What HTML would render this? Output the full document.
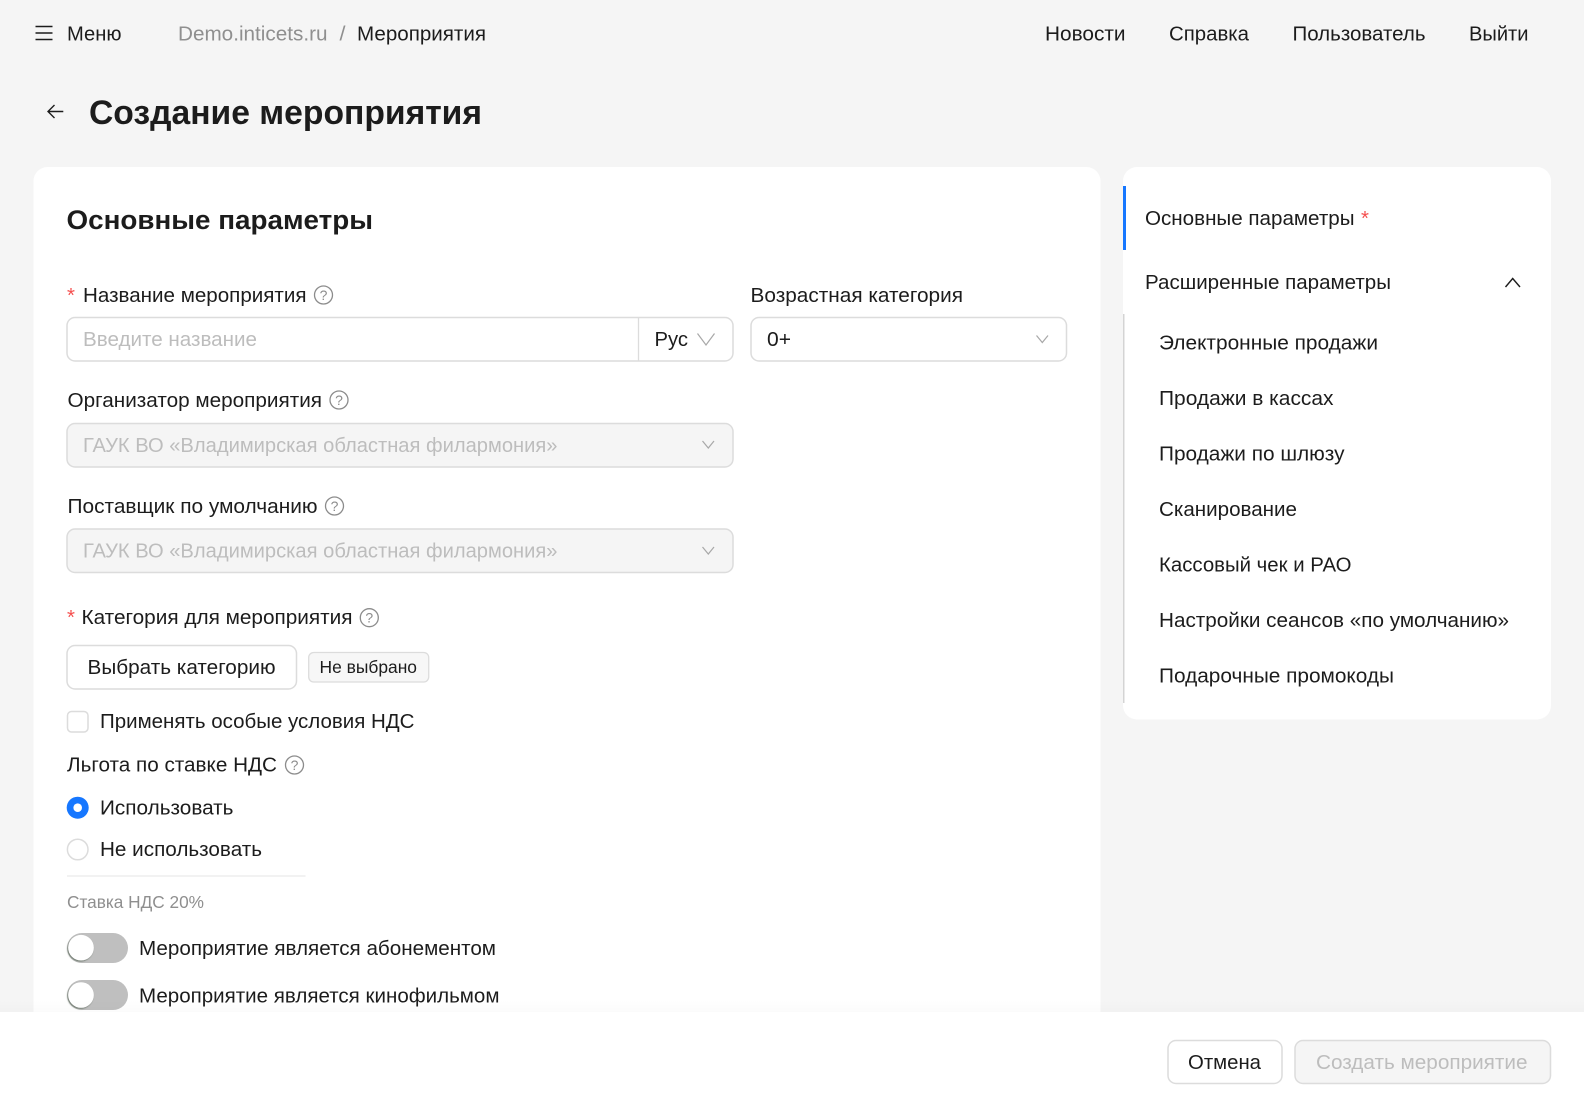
<!DOCTYPE html>
<html lang="ru">
<head>
<meta charset="utf-8">
<title>Создание мероприятия</title>
<style>
html,body{margin:0;padding:0;background:#f5f5f5;width:1584px;height:1112px;overflow:hidden}
svg{display:block}
text{font-family:"Liberation Sans","Noto Sans CJK SC",sans-serif;font-size:20.4px;fill:#1c1c1c}
.g{fill:#8f8f8f}
.p{fill:#bdbdbd}
.b{font-weight:700}
.r{fill:#f5504f}
.i{fill:none;stroke:#8c8c8c;stroke-width:1.3}
.q{font-size:14px;fill:#8c8c8c;text-anchor:middle}
.f{fill:#fff;stroke:#dcdcdc;stroke-width:1.5}
.d{fill:#f5f5f5;stroke:#dcdcdc;stroke-width:1.5}
.c{fill:none;stroke:#a8a8a8;stroke-width:1.2}
</style>
</head>
<body>
<svg width="1584" height="1112" viewBox="0 0 1584 1112" xmlns="http://www.w3.org/2000/svg">
<defs>
<linearGradient id="fs" x1="0" y1="0" x2="0" y2="1"><stop offset="0" stop-color="#000" stop-opacity="0"/><stop offset="1" stop-color="#000" stop-opacity=".015"/></linearGradient>
<filter id="ks" x="-30%" y="-30%" width="160%" height="160%"><feDropShadow dx="-0.8" dy="1" stdDeviation="0.8" flood-color="#5c6b5c" flood-opacity=".85"/></filter>
</defs>
<rect width="1584" height="1112" fill="#f5f5f5"/>

<!-- header -->
<path d="M35.5 26.5H52.5M35.5 33H52.5M35.5 39.5H52.5" stroke="#1c1c1c" stroke-width="1.6" fill="none"/>
<text x="67" y="40.5" textLength="54.5" lengthAdjust="spacingAndGlyphs">Меню</text>
<text x="178" y="40.5" textLength="149.5" lengthAdjust="spacingAndGlyphs" class="g">Demo.inticets.ru</text>
<text x="339.5" y="40.5" textLength="6" lengthAdjust="spacingAndGlyphs" class="g">/</text>
<text x="357" y="40.5" textLength="129" lengthAdjust="spacingAndGlyphs">Мероприятия</text>
<text x="1045" y="40.5" textLength="80.5" lengthAdjust="spacingAndGlyphs">Новости</text>
<text x="1169" y="40.5" textLength="80" lengthAdjust="spacingAndGlyphs">Справка</text>
<text x="1292.5" y="40.5" textLength="133" lengthAdjust="spacingAndGlyphs">Пользователь</text>
<text x="1469" y="40.5" textLength="59.5" lengthAdjust="spacingAndGlyphs">Выйти</text>

<!-- title -->
<path d="M63.3 111.5H48.5M54.5 105L48 111.5L54.5 118" stroke="#1c1c1c" stroke-width="1.4" fill="none"/>
<text x="89" y="124" textLength="393" lengthAdjust="spacingAndGlyphs" class="b" style="font-size:34px">Создание мероприятия</text>

<!-- main card -->
<rect x="33.5" y="167" width="1067" height="900" rx="14" fill="#fff"/>
<text x="66.5" y="229" textLength="306.5" lengthAdjust="spacingAndGlyphs" class="b" style="font-size:27px">Основные параметры</text>

<!-- row 1 -->
<text x="67" y="302" class="r">*</text>
<text x="83" y="302" textLength="223.5" lengthAdjust="spacingAndGlyphs">Название мероприятия</text>
<circle cx="323.5" cy="295" r="9" class="i"/><text x="323.5" y="300" class="q">?</text>
<rect x="67" y="317.5" width="666" height="43.5" rx="8" class="f"/>
<path d="M638.5 318V360.5" stroke="#dcdcdc" stroke-width="1.3"/>
<text x="83" y="346" textLength="174" lengthAdjust="spacingAndGlyphs" class="p">Введите название</text>
<text x="654.5" y="346" textLength="33.5" lengthAdjust="spacingAndGlyphs">Рус</text>
<path d="M697.5 333.5L706 345L714.5 333.5" class="c"/>
<text x="750.5" y="302" textLength="212.5" lengthAdjust="spacingAndGlyphs">Возрастная категория</text>
<rect x="751" y="317.5" width="315.5" height="43.5" rx="8" class="f"/>
<text x="767" y="346" textLength="24" lengthAdjust="spacingAndGlyphs">0+</text>
<path d="M1036.5 335.5L1042.3 342.5L1048 335.5" class="c"/>

<!-- row 2 -->
<text x="67.5" y="407" textLength="254.5" lengthAdjust="spacingAndGlyphs">Организатор мероприятия</text>
<circle cx="339" cy="400" r="9" class="i"/><text x="339" y="405" class="q">?</text>
<rect x="67" y="423.5" width="666" height="43.5" rx="8" class="d"/>
<text x="83" y="452" textLength="474.5" lengthAdjust="spacingAndGlyphs" class="p">ГАУК ВО «Владимирская областная филармония»</text>
<path d="M702.5 441L708.3 448L714 441" class="c"/>

<!-- row 3 -->
<text x="67.5" y="513" textLength="250" lengthAdjust="spacingAndGlyphs">Поставщик по умолчанию</text>
<circle cx="334.5" cy="506" r="9" class="i"/><text x="334.5" y="511" class="q">?</text>
<rect x="67" y="529" width="666" height="43.5" rx="8" class="d"/>
<text x="83" y="557.5" textLength="474.5" lengthAdjust="spacingAndGlyphs" class="p">ГАУК ВО «Владимирская областная филармония»</text>
<path d="M702.5 547L708.3 554L714 547" class="c"/>

<!-- category -->
<text x="67" y="624" class="r">*</text>
<text x="81.5" y="624" textLength="271" lengthAdjust="spacingAndGlyphs">Категория для мероприятия</text>
<circle cx="369.3" cy="617.7" r="9" class="i"/><text x="369.3" y="622.7" class="q">?</text>
<rect x="67" y="645.5" width="229.5" height="43.5" rx="8" class="f"/>
<text x="87.5" y="674" textLength="188" lengthAdjust="spacingAndGlyphs">Выбрать категорию</text>
<rect x="308.7" y="652.5" width="120" height="29.5" rx="5" fill="#f7f7f7" stroke="#dcdcdc" stroke-width="1.3"/>
<text x="319.5" y="673" textLength="97.5" lengthAdjust="spacingAndGlyphs" style="font-size:17.5px">Не выбрано</text>

<!-- checkbox -->
<rect x="67.5" y="711.5" width="20.5" height="20.5" rx="4" class="f"/>
<text x="100" y="728" textLength="314.5" lengthAdjust="spacingAndGlyphs">Применять особые условия НДС</text>

<!-- radio -->
<text x="67" y="771.5" textLength="210" lengthAdjust="spacingAndGlyphs">Льгота по ставке НДС</text>
<circle cx="294.5" cy="765" r="9" class="i"/><text x="294.5" y="770" class="q">?</text>
<circle cx="77.7" cy="807.7" r="11" fill="#1677ff"/><circle cx="77.7" cy="807.7" r="4.3" fill="#fff"/>
<text x="100" y="814.3" textLength="133.5" lengthAdjust="spacingAndGlyphs">Использовать</text>
<circle cx="77.7" cy="849.5" r="10.3" class="f"/>
<text x="100" y="856" textLength="162" lengthAdjust="spacingAndGlyphs">Не использовать</text>
<path d="M67 876H305.5" stroke="#eeeeee" stroke-width="1.4"/>
<text x="67" y="908" textLength="137" lengthAdjust="spacingAndGlyphs" class="g" style="font-size:17.5px">Ставка НДС 20%</text>

<!-- toggles -->
<rect x="67" y="933" width="61" height="30" rx="15" fill="#bfbfbf"/>
<circle cx="81" cy="947.7" r="12.8" fill="#fff" filter="url(#ks)"/>
<text x="139" y="955" textLength="357" lengthAdjust="spacingAndGlyphs">Мероприятие является абонементом</text>
<rect x="67" y="980" width="61" height="30" rx="15" fill="#bfbfbf"/>
<circle cx="81" cy="995" r="12.8" fill="#fff" filter="url(#ks)"/>
<text x="139" y="1002.5" textLength="360.5" lengthAdjust="spacingAndGlyphs">Мероприятие является кинофильмом</text>

<!-- side card -->
<rect x="1123" y="167" width="428" height="552.5" rx="14" fill="#fff"/>
<rect x="1123" y="186" width="3" height="64" fill="#1677ff"/>
<text x="1145" y="225" textLength="209.5" lengthAdjust="spacingAndGlyphs">Основные параметры</text>
<text x="1361" y="225" class="r">*</text>
<text x="1145" y="289" textLength="246" lengthAdjust="spacingAndGlyphs">Расширенные параметры</text>
<path d="M1505.5 287L1512.7 278.5L1520 287" stroke="#1c1c1c" stroke-width="1.4" fill="none"/>
<rect x="1123" y="314" width="1.5" height="389" fill="#d4d4d4"/>
<text x="1159" y="349.3" textLength="219" lengthAdjust="spacingAndGlyphs">Электронные продажи</text>
<text x="1159" y="405" textLength="174.5" lengthAdjust="spacingAndGlyphs">Продажи в кассах</text>
<text x="1159" y="460.6" textLength="185.5" lengthAdjust="spacingAndGlyphs">Продажи по шлюзу</text>
<text x="1159" y="516" textLength="138" lengthAdjust="spacingAndGlyphs">Сканирование</text>
<text x="1159" y="571.6" textLength="192.5" lengthAdjust="spacingAndGlyphs">Кассовый чек и РАО</text>
<text x="1159" y="627" textLength="350" lengthAdjust="spacingAndGlyphs">Настройки сеансов «по умолчанию»</text>
<text x="1159" y="682.7" textLength="235" lengthAdjust="spacingAndGlyphs">Подарочные промокоды</text>

<!-- footer -->
<rect x="0" y="1000" width="1584" height="12" fill="url(#fs)"/>
<rect x="0" y="1012" width="1584" height="100" fill="#fff"/>
<rect x="1168" y="1040.5" width="114" height="43" rx="8" class="f"/>
<text x="1188" y="1069" textLength="73" lengthAdjust="spacingAndGlyphs">Отмена</text>
<rect x="1295" y="1040.5" width="255.5" height="43" rx="8" class="d"/>
<text x="1316" y="1069" textLength="211.5" lengthAdjust="spacingAndGlyphs" class="p">Создать мероприятие</text>
</svg>
</body>
</html>
